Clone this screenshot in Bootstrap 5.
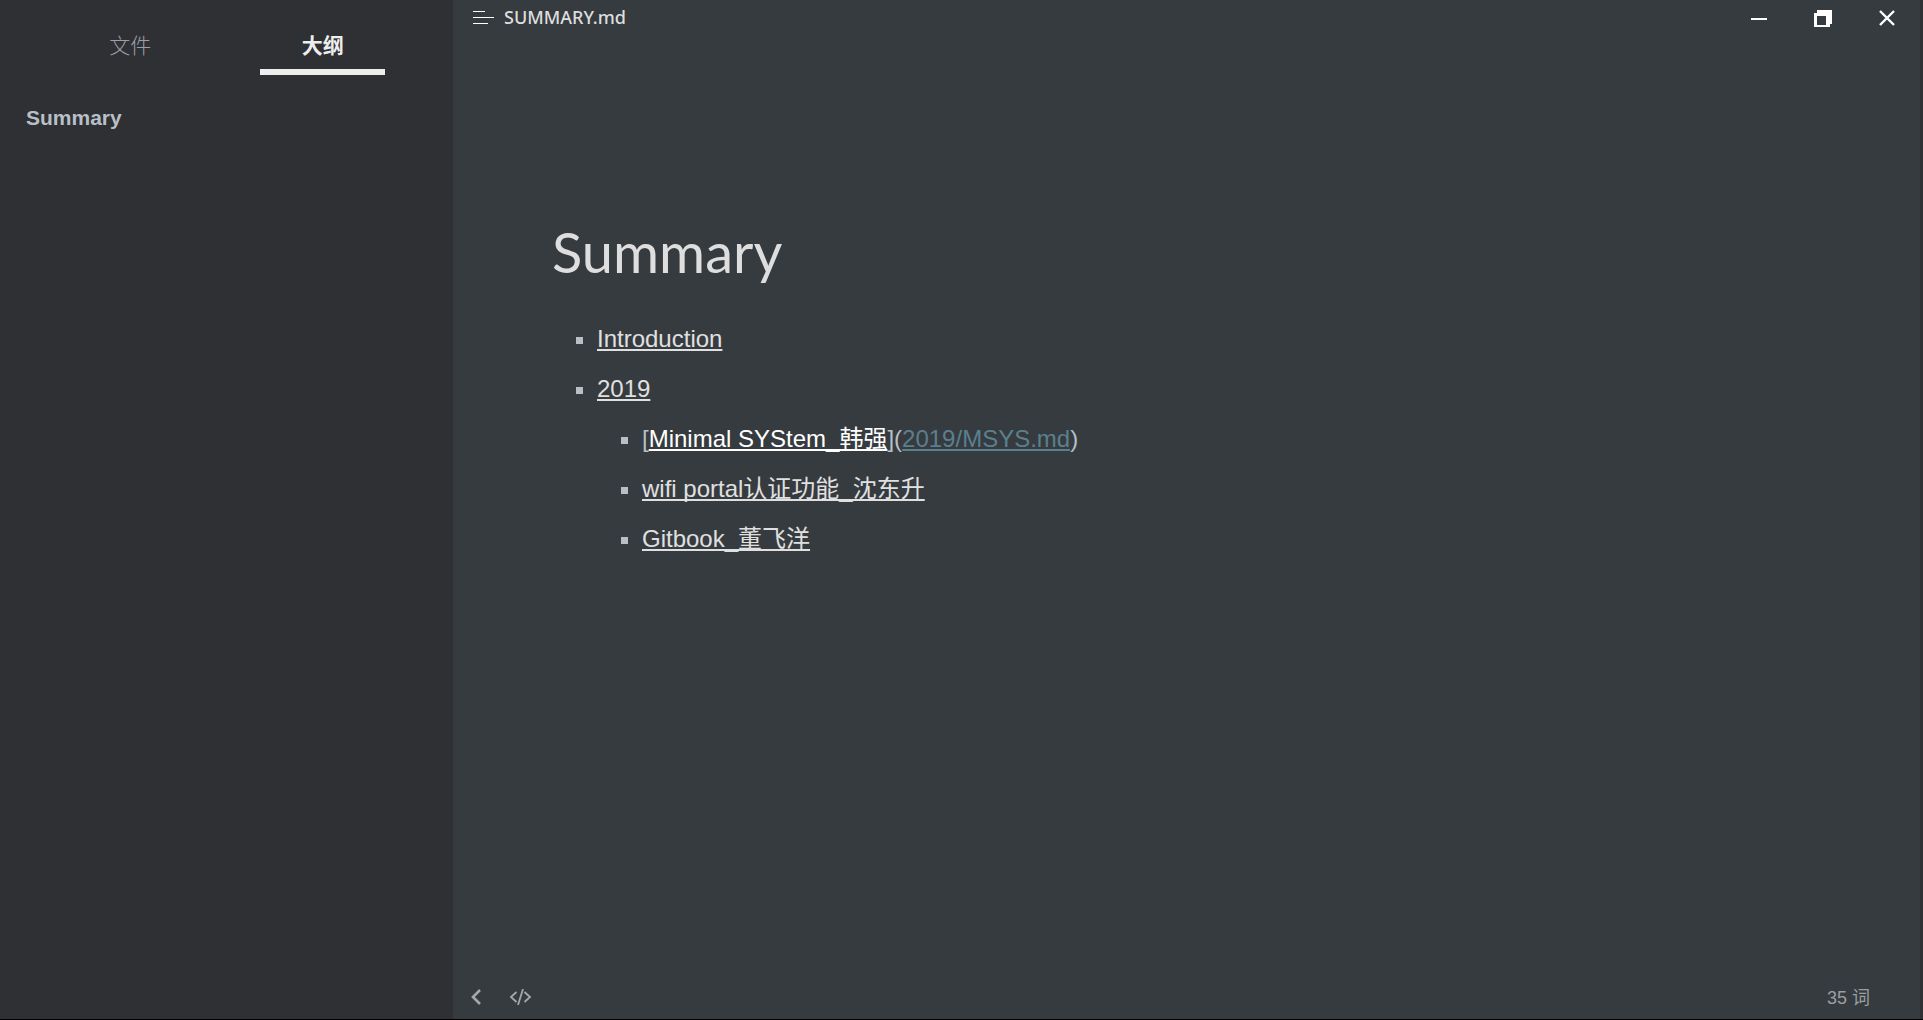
<!DOCTYPE html>
<html lang="zh-CN">
<head>
<meta charset="utf-8">
<meta name="viewport" content="width=device-width, initial-scale=1">
<title>SUMMARY.md</title>
<link href="https://cdn.jsdelivr.net/npm/bootstrap@5.3.0/dist/css/bootstrap.min.css" rel="stylesheet">
<style>
  body { background: #363b3f; color: #b8bfc6; font-family: "Liberation Sans", "Noto Sans CJK SC", sans-serif; }
  .app-shell { border-bottom: 1px solid #000; }
  .app-sidebar { width: 453px; background: #2e3033; }
  .side-tabs { padding: 20px 34px 0; }
  .side-tab { height: 55px; padding: 11px 0 0; border: 0; background: none; color: #9a9fa5; font-size: 21px; line-height: 30px; font-weight: 300; display: flex; flex-direction: column; align-items: center; justify-content: space-between; }
  .side-tab.active { color: #eee; font-weight: 700; }
  .side-tab.active::after { content: ""; width: 65%; height: 6px; background: #eee; }
  .outline-link { color: #b8bfc6; font-size: 21px; line-height: 30px; font-weight: 700; padding: 28px 26px 0; }
  .app-main { border-right: 3px solid #2e3033; }
  .title-bar { height: 36px; padding: 0 1px 0 20px; }
  .file-name { color: #dedede; font: 500 18px/34px "Noto Sans", sans-serif; padding-left: 10px; height: 36px; }
  .icon-btn { border: 0; padding: 0; background: none; color: #fff; display: flex; align-items: center; justify-content: center; }
  .win-btn { width: 64px; height: 36px; }
  .doc-body { padding: 180px 99px 0; font-size: 24px; line-height: 30px; }
  .doc-title { color: #dedede; font: 400 56px/72px Lato, sans-serif; margin-bottom: 36px; }
  .doc-list { list-style: none; padding-left: 45px; margin: 0; }
  .doc-item::before { content: ""; float: left; width: 7px; height: 7px; margin: 13px 0 0 -21px; background: #b8bfc6; }
  .doc-item > .doc-list { margin-top: 20px; }
  .doc-item + .doc-item { margin-top: 20px; }
  .doc-item a { color: #e0e0e0; text-decoration-thickness: 2px; text-underline-offset: 2px; text-decoration-skip-ink: none; }
  .doc-item a.link-strong { color: #fff; }
  .doc-item a.link-target { color: #5b7f8e; }
  .status-bar { height: 45px; padding: 0 50px 0 18px; color: #9a9fa3; font-size: 18px; }
  .status-bar .icon-btn { color: #a4a8aa; height: 44px; }
</style>
<script src="https://cdn.jsdelivr.net/npm/bootstrap@5.3.0/dist/js/bootstrap.bundle.min.js"></script>
</head>
<body>
<div class="app-shell d-flex vh-100">
  <aside class="app-sidebar flex-shrink-0">
    <div class="side-tabs d-flex" role="tablist">
      <button class="side-tab w-50" type="button" role="tab" aria-selected="false">文件</button>
      <button class="side-tab active w-50" type="button" role="tab" aria-selected="true">大纲</button>
    </div>
    <nav><a class="outline-link d-block text-decoration-none" href="#summary">Summary</a></nav>
  </aside>
  <div class="app-main d-flex flex-column flex-grow-1">
    <header class="title-bar d-flex align-items-center">
      <button class="icon-btn" type="button" aria-label="Menu">
        <svg width="21" height="14" viewBox="0 0 21 14" fill="#fff"><path d="M0 0h12v1H0zM0 6h21v1H0zM0 12h15v1H0z"/></svg>
      </button>
      <span class="file-name me-auto">SUMMARY.md</span>
      <button class="icon-btn win-btn" type="button" aria-label="Minimize">
        <svg width="18" height="18" viewBox="0 0 18 18" fill="currentColor"><path d="M1 9h16v2H1z"/></svg>
      </button>
      <button class="icon-btn win-btn" type="button" aria-label="Restore">
        <svg width="18" height="17" viewBox="0 0 18 17" fill="currentColor" fill-rule="evenodd"><path d="M3 0h15v14h-2v3H0V3h3zM3 6v9h9V6z"/></svg>
      </button>
      <button class="icon-btn win-btn" type="button" aria-label="Close">
        <svg width="16" height="16" viewBox="0 0 16 16" stroke="currentColor" stroke-width="2.4"><path d="M1 1l14 14M15 1L1 15"/></svg>
      </button>
    </header>
    <main class="doc-body flex-grow-1">
      <h1 class="doc-title" id="summary">Summary</h1>
      <ul class="doc-list">
        <li class="doc-item"><a href="#">Introduction</a></li>
        <li class="doc-item"><a href="#">2019</a>
          <ul class="doc-list">
            <li class="doc-item">[<a class="link-strong" href="#">Minimal SYStem_韩强</a>](<a class="link-target" href="#">2019/MSYS.md</a>)</li>
            <li class="doc-item"><a href="#">wifi portal认证功能_沈东升</a></li>
            <li class="doc-item"><a href="#">Gitbook_董飞洋</a></li>
          </ul>
        </li>
      </ul>
    </main>
    <footer class="status-bar d-flex align-items-center">
      <button class="icon-btn" type="button" aria-label="Hide sidebar">
        <svg width="10" height="16" viewBox="0 0 10 16" fill="none" stroke="currentColor" stroke-width="2.6"><path d="M9 1L2 8l7 7"/></svg>
      </button>
      <button class="icon-btn ms-4 ps-1 me-auto" type="button" aria-label="Source code mode">
        <svg width="23" height="16" viewBox="0 0 22 16" fill="none" stroke="currentColor" stroke-width="1.8"><path d="M7 3L1.500 8 7 13M15 3l5.500 5L15 13M13.500 0l-5 16"/></svg>
      </button>
      <span class="pt-1">35 词</span>
    </footer>
  </div>
</div>
</body>
</html>
